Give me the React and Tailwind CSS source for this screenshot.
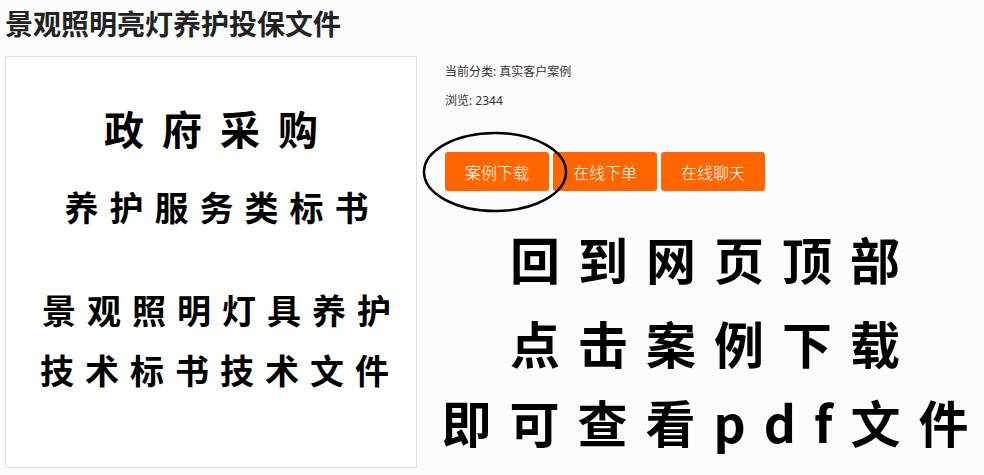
import React from "react";

const cjk = "font-['Noto_Sans_CJK_SC','Noto_Sans',sans-serif]";

const PosterLeft = () => (
  <div className="w-[412px] h-[412px] shrink-0 bg-white border border-[#e3e3e3] flex flex-col items-center text-black font-bold">
    <div className="mt-[51px] text-[40px] leading-[40px] tracking-[18px] pl-[18px] whitespace-nowrap">政府采购</div>
    <div className="mt-[42px] text-[34px] leading-[34px] tracking-[11px] pl-[22px] whitespace-nowrap">养护服务类标书</div>
    <div className="mt-[69px] text-[34px] leading-[34px] tracking-[11px] pl-[22px] whitespace-nowrap">景观照明灯具养护</div>
    <div className="mt-[26px] text-[34px] leading-[34px] tracking-[11px] pl-[18px] whitespace-nowrap">技术标书技术文件</div>
  </div>
);

const App = () => {
  return (
    <div className={`w-[984px] h-[475px] overflow-hidden bg-[#fcfcfc] text-[#222] ${cjk}`}>
      <h1 className="pl-[5px] pt-[9px] text-[28px] leading-[28px] font-bold text-[#222]">
        景观照明亮灯养护投保文件
      </h1>
      <div className="flex mt-[19px] pl-[5px]">
        <PosterLeft />
        <div className="ml-[28px] flex flex-col">
          <p className="mt-[10px] text-[12px] leading-[12px] text-[#333] font-['Noto_Sans','Noto_Sans_CJK_SC',sans-serif]">当前分类: 真实客户案例</p>
          <p className="mt-[17px] text-[12px] leading-[12px] text-[#333] font-['Noto_Sans','Noto_Sans_CJK_SC',sans-serif]">浏览: 2344</p>
          <div className="relative mt-[45px] flex gap-[4px]">
            <button className="w-[104px] h-[39px] rounded-[3px] bg-[#ff6600] text-white text-[16px] font-light">案例下载</button>
            <button className="w-[104px] h-[39px] rounded-[3px] bg-[#ff6600] text-white text-[16px] font-light">在线下单</button>
            <button className="w-[104px] h-[39px] rounded-[3px] bg-[#ff6600] text-white text-[16px] font-light">在线聊天</button>
            <svg className="absolute left-[-23px] top-[-21px]" width="146" height="82" viewBox="0 0 146 82" fill="none">
              <ellipse cx="73" cy="41" rx="71" ry="39" stroke="#000" strokeWidth="2.5" />
            </svg>
          </div>
          <div className="ml-[-10px] w-[540px] flex flex-col items-center text-black font-bold whitespace-nowrap">
            <div className="mt-[42px] text-[50px] leading-[50px] tracking-[18px] pl-[18px]">回到网页顶部</div>
            <div className="mt-[34px] text-[50px] leading-[50px] tracking-[18px] pl-[18px]">点击案例下载</div>
            <div className="mt-[29px] text-[50px] leading-[50px] tracking-[18px] pl-[18px]">即可查看pdf文件</div>
          </div>
        </div>
      </div>
    </div>
  );
};

export default App;
